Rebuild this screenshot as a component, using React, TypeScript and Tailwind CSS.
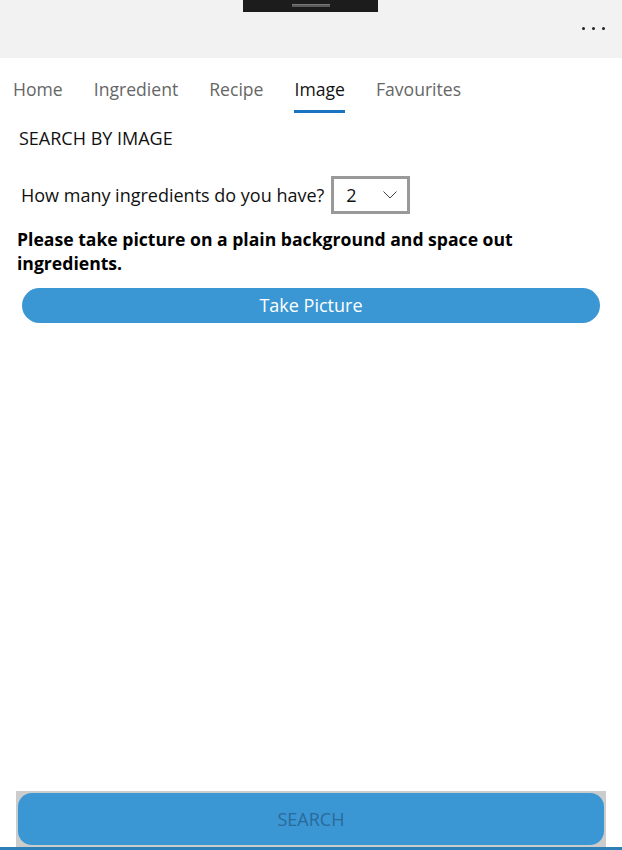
import React from "react";

export default function App() {
  const tabs = ["Home", "Ingredient", "Recipe", "Image", "Favourites"];
  return (
    <div
      className="w-[622px] h-[850px] bg-white flex flex-col overflow-hidden"
      style={{ fontFamily: '"Open Sans", "Noto Sans", sans-serif' }}
    >
      {/* Title bar */}
      <div className="h-[58px] bg-[#f2f2f2] flex items-start shrink-0">
        <div className="ml-[243px] w-[135px] h-[12px] bg-[#1c1c1c] flex justify-center items-start pt-[4px]">
          <div className="w-[38px] h-[3px] bg-[#5a5a5a] border-t border-[#777]" />
        </div>
        <div className="flex-1" />
        <div className="mt-[27px] mr-[17px] flex gap-[7px]">
          <span className="w-[3px] h-[3px] rounded-full bg-[#222]" />
          <span className="w-[3px] h-[3px] rounded-full bg-[#222]" />
          <span className="w-[3px] h-[3px] rounded-full bg-[#222]" />
        </div>
      </div>

      {/* Tabs */}
      <div className="flex pl-[13px] gap-[31px] pt-[18px] shrink-0">
        {tabs.map((t) => (
          <div key={t} className="flex flex-col items-center">
            <span
              className={
                "text-[17.6px] leading-[26px] " +
                (t === "Image" ? "text-[#111]" : "text-[#666]")
              }
            >
              {t}
            </span>
            <div
              className={
                "mt-[8px] h-[3px] w-full " + (t === "Image" ? "bg-[#1a73c2]" : "bg-transparent")
              }
            />
          </div>
        ))}
      </div>

      {/* Content */}
      <div className="flex-1 flex flex-col">
        <div className="pl-[19px] pt-[14px] text-[18px] leading-[22px] text-[#111]">SEARCH BY IMAGE</div>

        <div className="flex items-center pl-[21px] mt-[27px]">
          <span className="text-[18px] text-[#111]">How many ingredients do you have?</span>
          <div className="ml-[7px] w-[79px] h-[38px] border-[3px] border-[#999] flex items-center justify-between pl-[12px] pr-[10px]">
            <span className="text-[18px] text-[#111]">2</span>
            <svg width="14" height="8" viewBox="0 0 14 8" fill="none">
              <path d="M0.5 0.5 L7 7 L13.5 0.5" stroke="#444" strokeWidth="1" />
            </svg>
          </div>
        </div>

        <div className="pl-[17px] pr-[80px] mt-[13px] text-[17.6px] leading-[24px] font-bold text-black">
          Please take picture on a plain background and space out ingredients.
        </div>

        <div className="px-[22px] mt-[13px]">
          <button className="w-full h-[35px] rounded-full bg-[#3a97d4] text-white text-[18px] flex items-center justify-center">
            Take Picture
          </button>
        </div>
      </div>

      {/* Bottom */}
      <div className="shrink-0 mx-[16px] h-[56px] bg-[#cccccc] p-[2px]">
        <button className="w-full h-[52px] rounded-[14px] bg-[#3a97d4] text-[#2a6a9a] text-[18px] flex items-center justify-center">
          SEARCH
        </button>
      </div>
      <div className="shrink-0 h-[3px] bg-[#2d7fb8]" />
    </div>
  );
}
